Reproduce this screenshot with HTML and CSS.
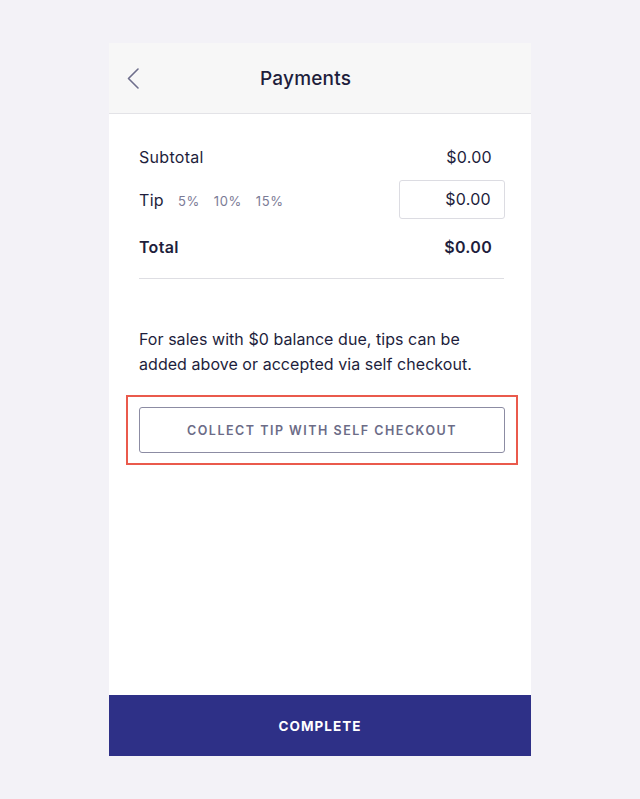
FILE: index.html
```html
<!DOCTYPE html>
<html>
<head>
<meta charset="utf-8">
<link rel="stylesheet" href="styles.css">
</head>
<body>
<div class="card">
  <div class="header">
    <svg class="back" width="12" height="21" viewBox="0 0 12 21"><path d="M11 1 L1.5 10.5 L11 20" fill="none" stroke="#6e6e8c" stroke-width="1.6" stroke-linecap="round" stroke-linejoin="round"/></svg>
    <div class="title">Payments</div>
  </div>
  <div class="content">
    <div class="row r1"><span>Subtotal</span><span>$0.00</span></div>
    <div class="row r2">
      <div class="tipl"><span>Tip</span><span class="pct">5%</span><span class="pct">10%</span><span class="pct">15%</span></div>
      <div class="input">$0.00</div>
    </div>
    <div class="row r3 bold"><span>Total</span><span>$0.00</span></div>
    <div class="divider"></div>
    <p class="note">For sales with $0 balance due, tips can be added above or accepted via self checkout.</p>
    <div class="highlight">
      <div class="collect">COLLECT TIP WITH SELF CHECKOUT</div>
    </div>
  </div>
  <div class="complete">COMPLETE</div>
</div>
</body>
</html>
```
FILE: styles.css
```css
body {
  margin: 0;
  background: #f3f2f7;
  font-family: Inter, "Noto Sans", sans-serif;
  color: #1e1e3c;
}
.card {
  width: 422px;
  height: 713px;
  margin: 43px auto 0;
  background: #fff;
  display: flex;
  flex-direction: column;
}
.header {
  height: 70px;
  background: #f7f7f7;
  border-bottom: 1px solid #e3e3e7;
  display: flex;
  align-items: center;
  padding-left: 18px;
}
.back { display: block; }
.title {
  margin-left: 121px;
  font-size: 19px;
  font-weight: 500;
  letter-spacing: 0.2px;
}
.content {
  padding: 28px 26px 0 30px;
  display: flex;
  flex-direction: column;
}
.row {
  display: flex;
  justify-content: space-between;
  align-items: center;
  font-size: 16px;
  letter-spacing: 0.3px;
}
.r1 { height: 30px; padding-right: 13px; }
.r2 { margin-top: 8px; }
.r3 { height: 30px; margin-top: 13px; padding-right: 13px; }
.bold { font-weight: 600; }
.tipl { display: flex; align-items: baseline; }
.pct {
  font-size: 13px;
  color: #7b7b96;
  margin-left: 14px;
  letter-spacing: 0.6px;
}
.tipl .pct:first-of-type { margin-left: 19px; }
.input {
  width: 106px;
  height: 39px;
  box-sizing: border-box;
  border: 1px solid #dcdce2;
  border-radius: 3px;
  text-align: right;
  padding-right: 13px;
  line-height: 37px;
  font-size: 16px;
}
.divider {
  height: 1px;
  background: #dedee3;
  margin-top: 16px;
  margin-right: 1px;
}
.note {
  margin: 48px 0 0;
  font-size: 16px;
  line-height: 25px;
  letter-spacing: 0.05px;
}
.highlight {
  margin: 18px -13px 0 -13px;
  padding: 10px 11px 10px 11px;
  border: 2px solid #ea5a4c;
}
.collect {
  height: 46px;
  box-sizing: border-box;
  border: 1px solid #8c8ca3;
  border-radius: 3px;
  display: flex;
  align-items: center;
  justify-content: center;
  font-size: 12.5px;
  font-weight: 600;
  letter-spacing: 1.5px;
  color: #6c6c87;
}
.complete {
  margin-top: auto;
  height: 61px;
  background: #2e3087;
  color: #fff;
  display: flex;
  align-items: center;
  justify-content: center;
  font-size: 13.5px;
  font-weight: 700;
  letter-spacing: 1px;
}
```
